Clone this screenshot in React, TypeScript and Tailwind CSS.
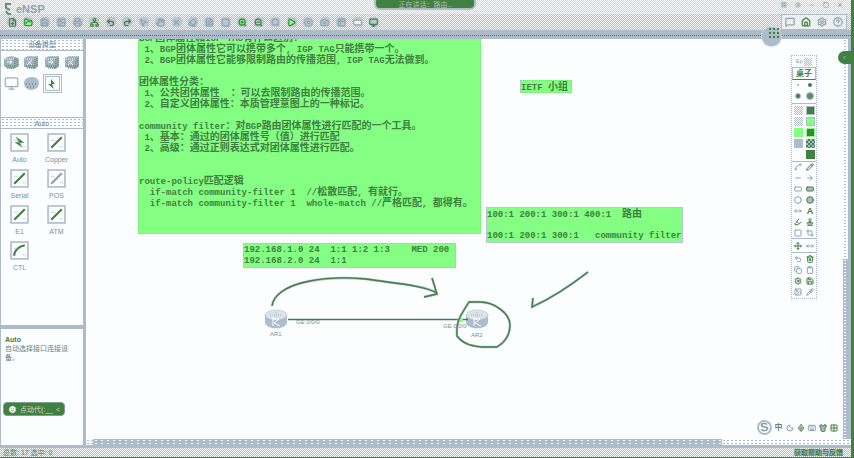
import React from 'react';
import {
  FilePlus, FolderOpen, Save, Printer, Undo2, Redo2, Hand, Trash2, Type, Square, RectangleHorizontal,
  Circle, Pencil, Eraser, Play, StopCircle, Search, ZoomIn, ZoomOut, Grid2x2, Monitor, Image, Camera,
  Settings, HelpCircle, MessageSquare, Home, Minus, ArrowRight, MoveHorizontal, Highlighter,
  Move, Copy, Clipboard, Pipette, X, Mic, Keyboard, Shirt, LayoutGrid, Moon, Smile, Spline, Crop,
  Network, Table2, MousePointer2, FileText, Stamp,
} from 'lucide-react';

const dither = 'bg-[repeating-conic-gradient(#adbcc8_0_25%,#fcfdff_0_50%)] bg-[length:2px_2px]';
const sparse = 'bg-[radial-gradient(#adbcc8_0.8px,transparent_0.9px)] bg-[length:4px_3px]';

type Tool = {
  n: string;
  i: React.ComponentType<{ size?: number; strokeWidth?: number; fill?: string }>;
  g?: boolean;
  fill?: string;
};

const tools: Tool[] = [
  { n: 'New topology', i: FilePlus, g: true }, { n: 'Open', i: FolderOpen, g: true, fill: '#84ff84' }, { n: 'Save', i: Save }, { n: 'Save as', i: Image },
  { n: 'Print', i: Printer }, { n: 'Examples', i: Network, g: true, fill: '#84ff84' }, { n: 'Undo', i: Undo2, g: true }, { n: 'Redo', i: Redo2, g: true },
  { n: 'Select', i: MousePointer2 }, { n: 'Drag', i: Hand }, { n: 'Delete', i: X }, { n: 'Delete line', i: Eraser },
  { n: 'Text', i: FileText }, { n: 'Palette', i: Square }, { n: 'Zoom in', i: ZoomIn, g: true, fill: '#84ff84' }, { n: 'Zoom out', i: ZoomOut, g: true },
  { n: 'Reset', i: Search }, { n: 'Start devices', i: Play, g: true, fill: '#84ff84' }, { n: 'Stop devices', i: StopCircle }, { n: 'Capture', i: Camera },
  { n: 'Interfaces', i: Table2 }, { n: 'Grid', i: RectangleHorizontal, fill: '#fcfdff' }, { n: 'Open consoles', i: Monitor, g: true },
];

const corner: Tool[] = [
  { n: 'Forum', i: MessageSquare }, { n: 'Home', i: Home, g: true }, { n: 'Settings', i: Settings }, { n: 'Help', i: HelpCircle },
];

const cables = [
  { n: 'Auto', d: 'M5 3 L12 8 L8 8 L10 12 L4 8 L8 8 Z' },
  { n: 'Copper', d: 'M3 13 L13 3' },
  { n: 'Serial', d: 'M3 13 L7 9 L9 7 L13 3' },
  { n: 'POS', d: 'M3 13 L13 3', pale: true },
  { n: 'E1', d: 'M3 13 L13 3' },
  { n: 'ATM', d: 'M3 13 L8 8 L9 7 L13 3' },
  { n: 'CTL', d: 'M3 13 C3 8 7 4 13 3' },
];

const drawing: Tool[] = [
  { n: 'Curve', i: Spline }, { n: 'Pencil', i: Pencil, g: true }, { n: 'Line', i: Minus }, { n: 'Arrow', i: ArrowRight },
  { n: 'Rectangle', i: RectangleHorizontal }, { n: 'Filled rectangle', i: RectangleHorizontal, g: true, fill: '#adbcc8' }, { n: 'Ellipse', i: Circle }, { n: 'Filled ellipse', i: Circle, g: true, fill: '#adbcc8' },
  { n: 'Double arrow', i: MoveHorizontal }, { n: 'Text', i: Type, g: true }, { n: 'Highlighter', i: Highlighter, g: true }, { n: 'Stamp', i: Stamp, g: true },
  { n: 'Eraser', i: Square }, { n: 'Crop', i: Crop },
];
const moving: Tool[] = [{ n: 'Move', i: Move, g: true }, { n: 'Stretch', i: MoveHorizontal }];
const editing: Tool[] = [
  { n: 'Undo', i: Undo2 }, { n: 'Delete', i: Trash2, g: true }, { n: 'Copy', i: Copy }, { n: 'Paste', i: Clipboard },
  { n: 'Options', i: Settings, g: true }, { n: 'Save', i: Save, g: true }, { n: 'Screenshot', i: Image }, { n: 'Picker', i: Pipette },
];

function IconButton({ tool, size = 8 }: { tool: Tool; size?: number }) {
  const Icon = tool.i;
  return (
    <button aria-label={tool.n} className={`flex h-[10px] w-[10px] shrink-0 items-center justify-center ${tool.g ? 'text-[#408040]' : 'text-[#90a3b1]'}`}>
      <Icon size={size} strokeWidth={3} fill={tool.fill ?? 'none'} />
    </button>
  );
}

function LetterA() {
  return <span className="w-[10px] text-center font-['Liberation_Sans',sans-serif] text-[9px] font-bold leading-[10px] text-[#408040]">A</span>;
}

function Mixed({ text }: { text: string }) {
  const parts = text.split(/([\u3000-\u9fff\uff00-\uffef]+)/);
  return (
    <div className="h-[11px] leading-[11px]">
      {parts.map((p, k) => (k % 2 ? <span key={k} className="text-[10px]">{p}</span> : p))}
    </div>
  );
}

function Note({ lines, className }: { lines: string[]; className: string }) {
  return (
    <div className={`absolute whitespace-pre border border-dotted border-[#adbcc8] bg-[#84ff84] pt-px text-[9px] font-bold text-[#408040] ${className}`}>
      {lines.map((l, k) => <Mixed key={k} text={l} />)}
    </div>
  );
}

function Cube({ kind }: { kind: number }) {
  return (
    <svg width="17" height="15" viewBox="0 0 17 15">
      {kind === 0
        ? <path d="M1 4 Q8 -2 16 4 V11 Q8 17 1 11Z" fill="#9fb0bc" />
        : <path d="M1 3 L5 1 H15 V11 L12 14 L1 12Z" fill="#9fb0bc" />}
      <path d="M2 4 H11 M5 1 H14" stroke="#fcfdff" strokeDasharray="1 1" />
      <path d="M12 4 V13 M14 3 V12 M3 11 H12 M4 13 H12" stroke="#408040" strokeDasharray="1 1" />
      <path d={kind % 2 ? 'M4 10 L9 5 M5 6 L9 10' : 'M4 7 H9 M7 5 L9 7 L7 9'} stroke="#fcfdff" fill="none" />
    </svg>
  );
}

function Router({ x, y }: { x: number; y: number }) {
  return (
    <g transform={`translate(${x} ${y})`}>
      <path d="M-11 -4 V4 C-9 11 9 11 11 4 V-4Z" fill="#adbcc8" />
      <ellipse cx="0" cy="-4" rx="11" ry="5" fill="#dbe3e9" stroke="#adbcc8" strokeDasharray="1 1" />
      <path d="M-6 -4 H6 M0 -7 V-1" stroke="#adbcc8" strokeDasharray="1 1" />
      <path d="M-3 7 V0 H3 L-2 4 L4 7 M0 0 L-4 -1" stroke="#fcfdff" fill="none" />
    </g>
  );
}

function Heading({ children, className = '' }: { children: React.ReactNode; className?: string }) {
  return (
    <h2 className={`flex h-3 shrink-0 items-center justify-center border-b border-[#adbcc8] text-[7px] leading-none text-[#6f8795] ${sparse} ${className}`}>
      {children}
    </h2>
  );
}

const notes = [
  'BGP团体属性和IGP TAG有什么区别:',
  ' 1、BGP团体属性它可以携带多个, IGP TAG只能携带一个。',
  ' 2、BGP团体属性它能够限制路由的传播范围, IGP TAG无法做到。',
  '',
  '团体属性分类：',
  ' 1、公共团体属性  ：可以去限制路由的传播范围。',
  ' 2、自定义团体属性：本质管理意图上的一种标记。',
  '',
  'community filter：对BGP路由团体属性进行匹配的一个工具。',
  ' 1、基本：通过的团体属性号（值）进行匹配',
  ' 2、高级：通过正则表达式对团体属性进行匹配。',
  '',
  '',
  'route-policy匹配逻辑',
  '  if-match community-filter 1  //松散匹配, 有就行。',
  '  if-match community-filter 1  whole-match //严格匹配, 都得有。',
];

function DrawingPalette() {
  return (
    <aside className="absolute right-[26px] top-[16px] w-[26px] border border-dotted border-[#adbcc8] bg-[#fcfdff]">
      <div className="flex h-[11px] items-center justify-between px-1 text-[6px] leading-none text-[#8ea1af]">
        <span>Ep</span><span className={`h-2 w-2 ${dither}`} />
      </div>
      <button className="flex h-[13px] w-full items-center justify-center border border-b-[#408040] border-[#adbcc8] text-[8px] font-bold leading-none text-[#408040]">桌子</button>
      <div className="grid h-6 grid-cols-2 place-items-center border-b border-[#adbcc8]">
        <span className="h-[2px] w-[2px] bg-[#adbcc8]" />
        <span className="h-1 w-1 rounded-full bg-[#408040]" />
        <span className="h-[6px] w-[6px] rounded-full border border-[#adbcc8] bg-[#408040]" />
        <span className="h-2 w-2 rounded-full border border-[#adbcc8] bg-[#5c8c68]" />
      </div>
      <div className="grid grid-cols-2 place-items-center gap-y-[2px] border-b border-[#adbcc8] py-[2px]">
        <span className={`h-[9px] w-[9px] ${dither}`} />
        <span className="h-[9px] w-[9px] border border-[#adbcc8] bg-[#408040]" />
        <span className={`h-[9px] w-[9px] ${dither}`} />
        <span className="h-[9px] w-[9px] border border-[#adbcc8] bg-[#84ff84]" />
        <span className="h-[9px] w-[9px] bg-[#84ff84]" />
        <span className="h-[9px] w-[9px] border border-[#84ff84] bg-[#408040]" />
        <span className="h-[9px] w-[9px] bg-[#adbcc8]" />
        <span className="h-[9px] w-[9px] bg-[repeating-conic-gradient(#408040_0_25%,#adbcc8_0_50%)] bg-[length:4px_4px]" />
        <span />
        <span className="h-[9px] w-[9px] bg-[#408040]" />
      </div>
      <div className="grid grid-cols-2 place-items-center gap-y-px border-b border-[#adbcc8]">
        {drawing.map((t) => (t.n === 'Text' ? <button key={t.n} aria-label="Text" className="flex"><LetterA /></button> : <IconButton key={t.n} tool={t} />))}
      </div>
      <div className="grid h-[14px] grid-cols-2 place-items-center border-b border-[#adbcc8]">
        {moving.map((t) => <IconButton key={t.n} tool={t} />)}
      </div>
      <div className="grid grid-cols-2 place-items-center gap-y-px py-px">
        {editing.map((t) => <IconButton key={t.n} tool={t} />)}
      </div>
    </aside>
  );
}

export default function App() {
  return (
    <div className="relative flex h-screen flex-col overflow-hidden border-r-[3px] border-[#408040] bg-[#fcfdff] font-['Liberation_Mono','Noto_Sans_CJK_SC',monospace]">
      <header className={`shrink-0 ${dither}`}>
        <div className="flex h-[14px] items-center justify-between bg-[#fcfdff]/40 pl-1 pr-2 pt-1">
          <h1 className="flex items-center gap-1 font-['Liberation_Sans',sans-serif] text-[11px] font-bold leading-none text-[#8ea1af]">
            <svg width="8" height="12" viewBox="0 0 8 12" fill="none" stroke="#6c8c7c" strokeWidth="2"><path d="M7 1 H2 V5 L6 7 M2 8 L4 11 H7" /></svg>
            eNSP
          </h1>
          <div className="flex items-center gap-2 pb-2 text-[#6f8d80]">
            <button aria-label="Account"><LayoutGrid size={6} /></button>
            <button aria-label="Menu"><Settings size={6} /></button>
            <button aria-label="Minimise"><Minus size={6} /></button>
            <button aria-label="Maximise"><Square size={6} /></button>
            <button aria-label="Close"><X size={6} strokeWidth={3} /></button>
          </div>
        </div>
        <div className="flex h-4 items-center justify-between pl-[7px] pr-1">
          <nav aria-label="Tools" className="flex w-[372px] items-center justify-between">
            {tools.map((t) => (
              <span key={t.n} className="rounded-sm bg-[#bac7d1]"><IconButton tool={t} size={9} /></span>
            ))}
          </nav>
          <div className="flex h-4 w-[66px] items-center justify-around border border-[#adbcc8] bg-[#fcfdff]/60">
            {corner.map((t) => <IconButton key={t.n} tool={t} size={10} />)}
          </div>
        </div>
        <div className="h-[9px] bg-[#adbcc8] pt-[5px]">
          <div className="border-t border-dotted border-[#408040]" />
        </div>
      </header>

      <div className="flex min-h-0 flex-1">
        <aside className="flex w-[86px] shrink-0 flex-col border-l border-r-[3px] border-[#adbcc8] font-['Liberation_Sans','Noto_Sans_CJK_SC',sans-serif]">
          <Heading>设备类型</Heading>
          <div className="grid h-[66px] shrink-0 grid-cols-4 content-start items-center justify-items-center gap-y-1 pt-1">
            {[0, 1, 2, 3].map((k) => <button key={k} aria-label={`Device ${k + 1}`}><Cube kind={k} /></button>)}
            <button aria-label="Terminals" className="text-[#9fb0bc]"><Monitor size={15} /></button>
            <button aria-label="Cloud">
              <svg width="17" height="15" viewBox="0 0 17 15">
                <path d="M1 7 C1 3 5 1 9 1 C14 1 16 4 16 7 C16 11 13 14 8 14 C4 14 1 11 1 7Z" fill="#adbcc8" />
                <path d="M3 8 H15 M4 11 H13" stroke="#408040" strokeDasharray="1 2" />
              </svg>
            </button>
            <button aria-label="Connections" className="flex h-[19px] w-[19px] items-center justify-center border-[3px] border-double border-[#adbcc8]">
              <svg width="12" height="12" viewBox="0 0 12 12"><path d="M5 1 L9 6 L6 6 L8 11 L2 6 L5 6Z" fill="#408040" /></svg>
            </button>
          </div>
          <Heading className="border-t">Auto</Heading>
          <div className="grid min-h-0 flex-1 grid-cols-[37px_37px] content-start gap-y-1 overflow-hidden pt-1">
            {cables.map((c) => (
              <button key={c.n} className="flex h-8 flex-col items-center text-[7px] leading-none text-[#788f9d]">
                <svg width="19" height="19" viewBox="-1 -1 18 18">
                  <rect width="16" height="16" fill="#fcfdff" stroke="#adbcc8" strokeWidth="1.5" />
                  <path d={c.d} fill={c.n === 'Auto' ? '#408040' : 'none'} stroke={c.pale ? '#8ba397' : '#408040'} strokeWidth={c.n === 'Auto' ? 0.5 : 2} />
                  <path d="M3 6 H6 M11 12 H14" stroke="#adbcc8" strokeDasharray="1 1" />
                </svg>
                <span className="pt-1">{c.n}</span>
              </button>
            ))}
          </div>
          <div className="h-[120px] shrink-0 border-t-4 border-[#adbcc8] px-1 pt-[6px] text-[7px] leading-[9px] text-[#668575]">
            <h3 className="font-bold text-[#408040]">Auto</h3>
            <p>自动选择接口连接设备。</p>
            <button className="-ml-[2px] mt-10 flex h-[14px] w-[62px] items-center justify-between rounded-sm border border-[#7f9f90] bg-[#408040] px-1 text-[#cedbd7]">
              <Smile size={9} fill="#fcfdff" stroke="#408040" />
              <span>点动代(:__</span>
              <span>&lt;</span>
            </button>
          </div>
        </aside>

        <div className="flex min-w-0 flex-1 flex-col">
          <div className="flex min-h-0 flex-1">
            <main className="relative min-w-0 flex-1 overflow-hidden">
              <Note lines={notes} className="-top-[8px] left-[52px] h-[203px] w-[343px]" />
              <Note lines={['IETF 小组']} className="left-[434px] top-[41px] h-[13px] w-[52px]" />
              <Note lines={['100:1 200:1 300:1 400:1  路由', '', '100:1 200:1 300:1   community filter']} className="left-[400px] top-[168px] h-[36px] w-[197px]" />
              <Note lines={['192.168.1.0 24  1:1 1:2 1:3    MED 200', '192.168.2.0 24  1:1']} className="left-[157px] top-[204px] h-[25px] w-[213px]" />
              <svg className="absolute left-0 top-0" width="757" height="400" viewBox="86 39 757 400" fill="none">
                <Router x={276} y={319} />
                <Router x={477} y={319} />
                <path d="M288 319.5 H468" stroke="#408040" strokeWidth="1.5" />
                <rect x="459" y="318" width="4" height="4" fill="#84ff84" />
                <g stroke="#adbcc8" strokeWidth="2.5">
                  <path d="M272 306 C273 297 283 286 310 281 C330 277 355 278 366 279 C390 283 424 285 437 293 M432 278 L437 294 L424 297" />
                  <path d="M469 302 C458 319 456 323 457 336 C464 345 473 346 481 347 H497 C507 341 510 334 510 325 C510 314 495 302 480 302 Z" />
                  <path d="M588 272 C570 286 554 297 532 307 L533 298" />
                </g>
                <g stroke="#408040" strokeWidth="1.3">
                  <path d="M272 306 C273 297 283 286 310 281 C330 277 355 278 366 279 C390 283 424 285 437 293 M432 278 L437 294 L424 297" />
                  <path d="M469 302 C458 319 456 323 457 336 C464 345 473 346 481 347 H497 C507 341 510 334 510 325 C510 314 495 302 480 302 Z" />
                  <path d="M588 272 C570 286 554 297 532 307 L533 298" />
                </g>
                <g fill="#78948a" fontFamily="Liberation Sans, sans-serif" fontSize="6">
                  <text x="270" y="336">AR1</text>
                  <text x="471" y="337">AR2</text>
                  <text x="296" y="324">GE 0/0/0</text>
                  <text x="443" y="328">GE 0/0/0</text>
                </g>
              </svg>
              <DrawingPalette />
              <div className="absolute bottom-[4px] right-[4px] flex items-center gap-[1px] text-[#68897a]">
                <span className="w-[15px] -rotate-6 rounded-full border-2 border-[#adbcc8] text-center font-['Liberation_Sans',sans-serif] text-[12px] font-bold leading-[11px] text-[#849b9f]">S</span>
                <span className="w-[11px] text-center text-[8px] font-bold leading-none">中</span>
                <IconButton tool={{ n: 'Half width', i: Moon }} />
                <IconButton tool={{ n: 'Voice', i: Mic, g: true }} />
                <IconButton tool={{ n: 'Keyboard', i: Keyboard }} />
                <IconButton tool={{ n: 'Skin', i: Shirt, g: true, fill: '#adbcc8' }} />
                <IconButton tool={{ n: 'Toolbox', i: Grid2x2, g: true }} />
              </div>
            </main>
            <div className="flex w-2 shrink-0 flex-col border-r-[3px] border-[#adbcc8]">
              <div className={`flex-1 ${sparse}`} />
              <div className="h-[180px] bg-[#adbcc8] bg-[radial-gradient(#fcfdff_0.8px,transparent_0.9px)] bg-[length:4px_3px]" />
            </div>
          </div>
          <div className={`flex h-[6px] shrink-0 items-stretch pl-[7px] ${sparse}`}>
            <div className="w-[83%] bg-[#adbcc8] bg-[radial-gradient(#fcfdff_0.6px,transparent_0.7px)] bg-[length:6px_3px]" />
          </div>
        </div>
      </div>

      <footer className={`flex h-[13px] shrink-0 items-center justify-between border-b border-t-[3px] border-t-[#adbcc8] border-b-[#408040] pl-[3px] pr-2 font-['Liberation_Sans','Noto_Sans_CJK_SC',sans-serif] text-[7px] leading-none text-[#587e6a] ${dither}`}>
        <span>总数: 17 选中: 0</span>
        <span className="bg-[#adbcc8] font-bold text-[#408040]">获取帮助与反馈</span>
      </footer>

      <div className="absolute -top-1 left-[374px] flex h-[14px] w-[102px] items-center justify-center rounded-md border-2 border-[#adbcc8] bg-[#408040] pt-1 text-[7px] leading-none text-[#adbcc8]">正在讲话：路由…</div>
      <div className="absolute right-[69px] top-[26px] h-[21px] w-[21px] rounded-full border border-dotted border-[#fcfdff] bg-[#adbcc8]">
        <div className="ml-[6px] h-3 w-3 bg-[radial-gradient(#408040_0.8px,transparent_0.9px)] bg-[length:4px_4px]" />
      </div>
      <button aria-label="Expand panel" className="absolute right-0 top-[51px] h-[13px] w-[13px] rounded-l-full bg-[#408040] text-[8px] leading-none text-[#adbcc8]">‹</button>
    </div>
  );
}
